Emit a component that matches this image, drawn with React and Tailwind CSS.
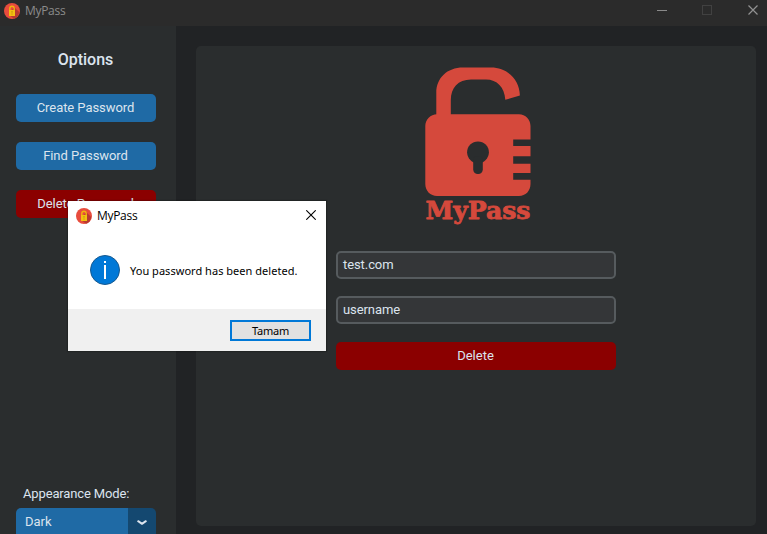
function AppIcon() {
  return (
    <svg width="16" height="16" viewBox="0 0 16 16" className="block shrink-0">
      <circle cx="8" cy="8" r="8" fill="#e84c3d" />
      <path d="M10 4 L15.2 9 A8 8 0 0 1 10 15.7 L5 12Z" fill="#b83a30" />
      <path d="M5.800 7V5.400a2.200 2.200 0 0 1 4.400 0V7" fill="none" stroke="#f0b40f" strokeWidth="1.4" />
      <rect x="5" y="7" width="6" height="6" fill="#f3c012" />
      <rect x="7.400" y="8.300" width="1.2" height="1.2" fill="#b8860b" />
      <rect x="7.400" y="10.5" width="1.2" height="1" fill="#c98a10" />
    </svg>
  );
}

function Logo() {
  return (
    <svg width="108" height="160" viewBox="0 0 108 160" className="block shrink-0">
      <g fill="#d5493c">
        <path d="M12.3 52V27C12.3 12 23 1.5 39 1.5H67C83 1.5 95.5 13 95.9 29.5L81.3 33.8C80.5 21 73 13.4 62 13.4H47C34 13.4 26.8 22 26.8 34V52Z" />
        <path d="M13 48.2H95C101.500 48.200 106.500 53.500 106.500 60V73.600H89.200V80H106.500V90.300H89.200V97.700H106.500V107H89.200V113.700H106.500V118C106.500 125 101.500 130 95 130H13C6.500 130 1.300 125 1.300 118V60C1.300 53.500 6.500 48.200 13 48.200Z" />
      </g>
      <circle cx="54" cy="86.300" r="10.900" fill="#2a2d2e" />
      <rect x="49.200" y="90" width="9.600" height="18" rx="4.500" fill="#2a2d2e" />
      <text x="1.500" y="152.800" textLength="105" lengthAdjust="spacingAndGlyphs" fill="#d5493c" stroke="#d5493c" strokeWidth="0.8" strokeLinejoin="round" fontFamily="'DejaVu Serif', serif" fontWeight="700" fontSize="23.5">
        MyPass
      </text>
    </svg>
  );
}

function TitleBar() {
  return (
    <header className="flex h-[26px] shrink-0 items-start justify-between bg-[#2b2b2b]">
      <div className="flex items-center gap-[5px] pl-1 pt-[2px]">
        <AppIcon />
        <span className="font-['Open_Sans',sans-serif] text-[12px] leading-[17px] tracking-[-0.3px] text-[#8b8b8b]">MyPass</span>
      </div>
      <svg width="110" height="20" viewBox="0 0 110 20" fill="none" className="block" shapeRendering="crispEdges">
        <path d="M0 10.500H10" stroke="#8a8a8a" />
        <rect x="45.500" y="5.500" width="9" height="9" stroke="#414141" />
        <path d="M91.500 5.500L100.500 14.500M100.500 5.500L91.500 14.500" stroke="#929292" strokeWidth="1.200" shapeRendering="auto" />
      </svg>
    </header>
  );
}

function SideButton({ children, danger }) {
  return (
    <button className={`h-7 w-[140px] rounded-[5px] pr-px text-center text-[13px] leading-[28px] tracking-[-0.06px] ${danger ? "bg-[#8b0000]" : "bg-[#1f6aa5]"}`}>
      {children}
    </button>
  );
}

function Sidebar() {
  return (
    <aside className="flex w-44 shrink-0 flex-col bg-[#2a2d2e] px-4">
      <h1 className="mt-[23px] pr-[5px] text-center text-[16px] font-medium leading-[22px]">Options</h1>
      <nav className="mt-[23px] flex flex-col gap-5">
        <SideButton>Create Password</SideButton>
        <SideButton>Find Password</SideButton>
        <SideButton danger>Delete Password</SideButton>
      </nav>
      <label className="mt-auto pl-[7px] text-[13px] leading-[28px] tracking-[-0.14px]">Appearance Mode:</label>
      <div className="flex h-[26px] w-[140px] shrink-0 overflow-hidden rounded-t-[5px]">
        <span className="flex-1 bg-[#1f6aa5] pl-[9px] text-[13px] leading-[28px]">Dark</span>
        <span className="flex w-7 items-center justify-center bg-[#144870] pt-[3px]">
          <svg width="10" height="6" viewBox="0 0 10 6" fill="none">
            <path d="M1.200 1.200L5 3.800L8.800 1.200" stroke="#dce4ee" strokeWidth="2" strokeLinecap="round" strokeLinejoin="round" />
          </svg>
        </span>
      </div>
    </aside>
  );
}

function Field({ value }) {
  return (
    <div className="h-7 w-[280px] rounded-[5px] border-2 border-[#565b5e] bg-[#343638] pl-[5px] text-[13px] leading-[23px] tracking-[-0.08px]">
      {value}
    </div>
  );
}

function Dialog() {
  return (
    <div className="absolute left-[68px] top-[201px] flex h-[150px] w-[258px] flex-col bg-white text-black shadow-[0_0_1px_1px_rgba(0,0,0,0.2)]">
      <div className="flex h-[30px] items-start justify-between pl-2 pr-[10px] pt-[6px]">
        <div className="flex items-center gap-[5px]">
          <AppIcon />
          <span className="font-['Open_Sans',sans-serif] text-[12px] leading-[17px] tracking-[-0.3px]">MyPass</span>
        </div>
        <svg width="10" height="10" viewBox="0 0 10 10" className="mt-[3px]">
          <path d="M0.300 0.300L9.700 9.700M9.700 0.300L0.300 9.700" stroke="#000" strokeWidth="1.100" />
        </svg>
      </div>
      <div className="flex flex-1 items-start gap-[10px] pl-[22px] pt-6">
        <svg width="30" height="30" viewBox="0 0 30 30" className="block">
          <circle cx="15" cy="15" r="14.500" fill="#0078d7" stroke="#17598f" />
          <rect x="14" y="6" width="2" height="2" fill="#fff" />
          <rect x="14" y="10" width="2" height="14" fill="#fff" />
        </svg>
        <p className="whitespace-nowrap font-['Noto_Sans',sans-serif] text-[11px] leading-[32px] tracking-[0.03px]">You password has been deleted.</p>
      </div>
      <div className="flex h-[42px] items-start justify-end bg-[#f0f0f0] pr-[15px] pt-[11px]">
        <button className="h-[21px] w-[81px] border-2 border-[#0078d7] bg-[#e1e1e1] text-center font-['Noto_Sans',sans-serif] text-[11px] leading-[18px] tracking-[-0.25px]">Tamam</button>
      </div>
    </div>
  );
}

export default function App() {
  return (
    <div className="relative flex h-[534px] w-[767px] flex-col overflow-hidden bg-[#212325] font-[Roboto,sans-serif] text-[#dce4ee]">
      <TitleBar />
      <div className="flex min-h-0 flex-1">
        <Sidebar />
        <main className="ml-5 mt-5 flex h-[480px] w-[560px] flex-col items-center rounded-[5px] bg-[#2a2d2e] pt-5">
          <div className="pl-1">
            <Logo />
          </div>
          <div className="mt-[25px] flex flex-col gap-[17px]">
            <Field value="test.com" />
            <Field value="username" />
            <button className="mt-px h-7 w-[280px] rounded-[5px] bg-[#8b0000] pr-px text-center text-[13px] leading-[28px]">Delete</button>
          </div>
        </main>
      </div>
      <Dialog />
    </div>
  );
}
